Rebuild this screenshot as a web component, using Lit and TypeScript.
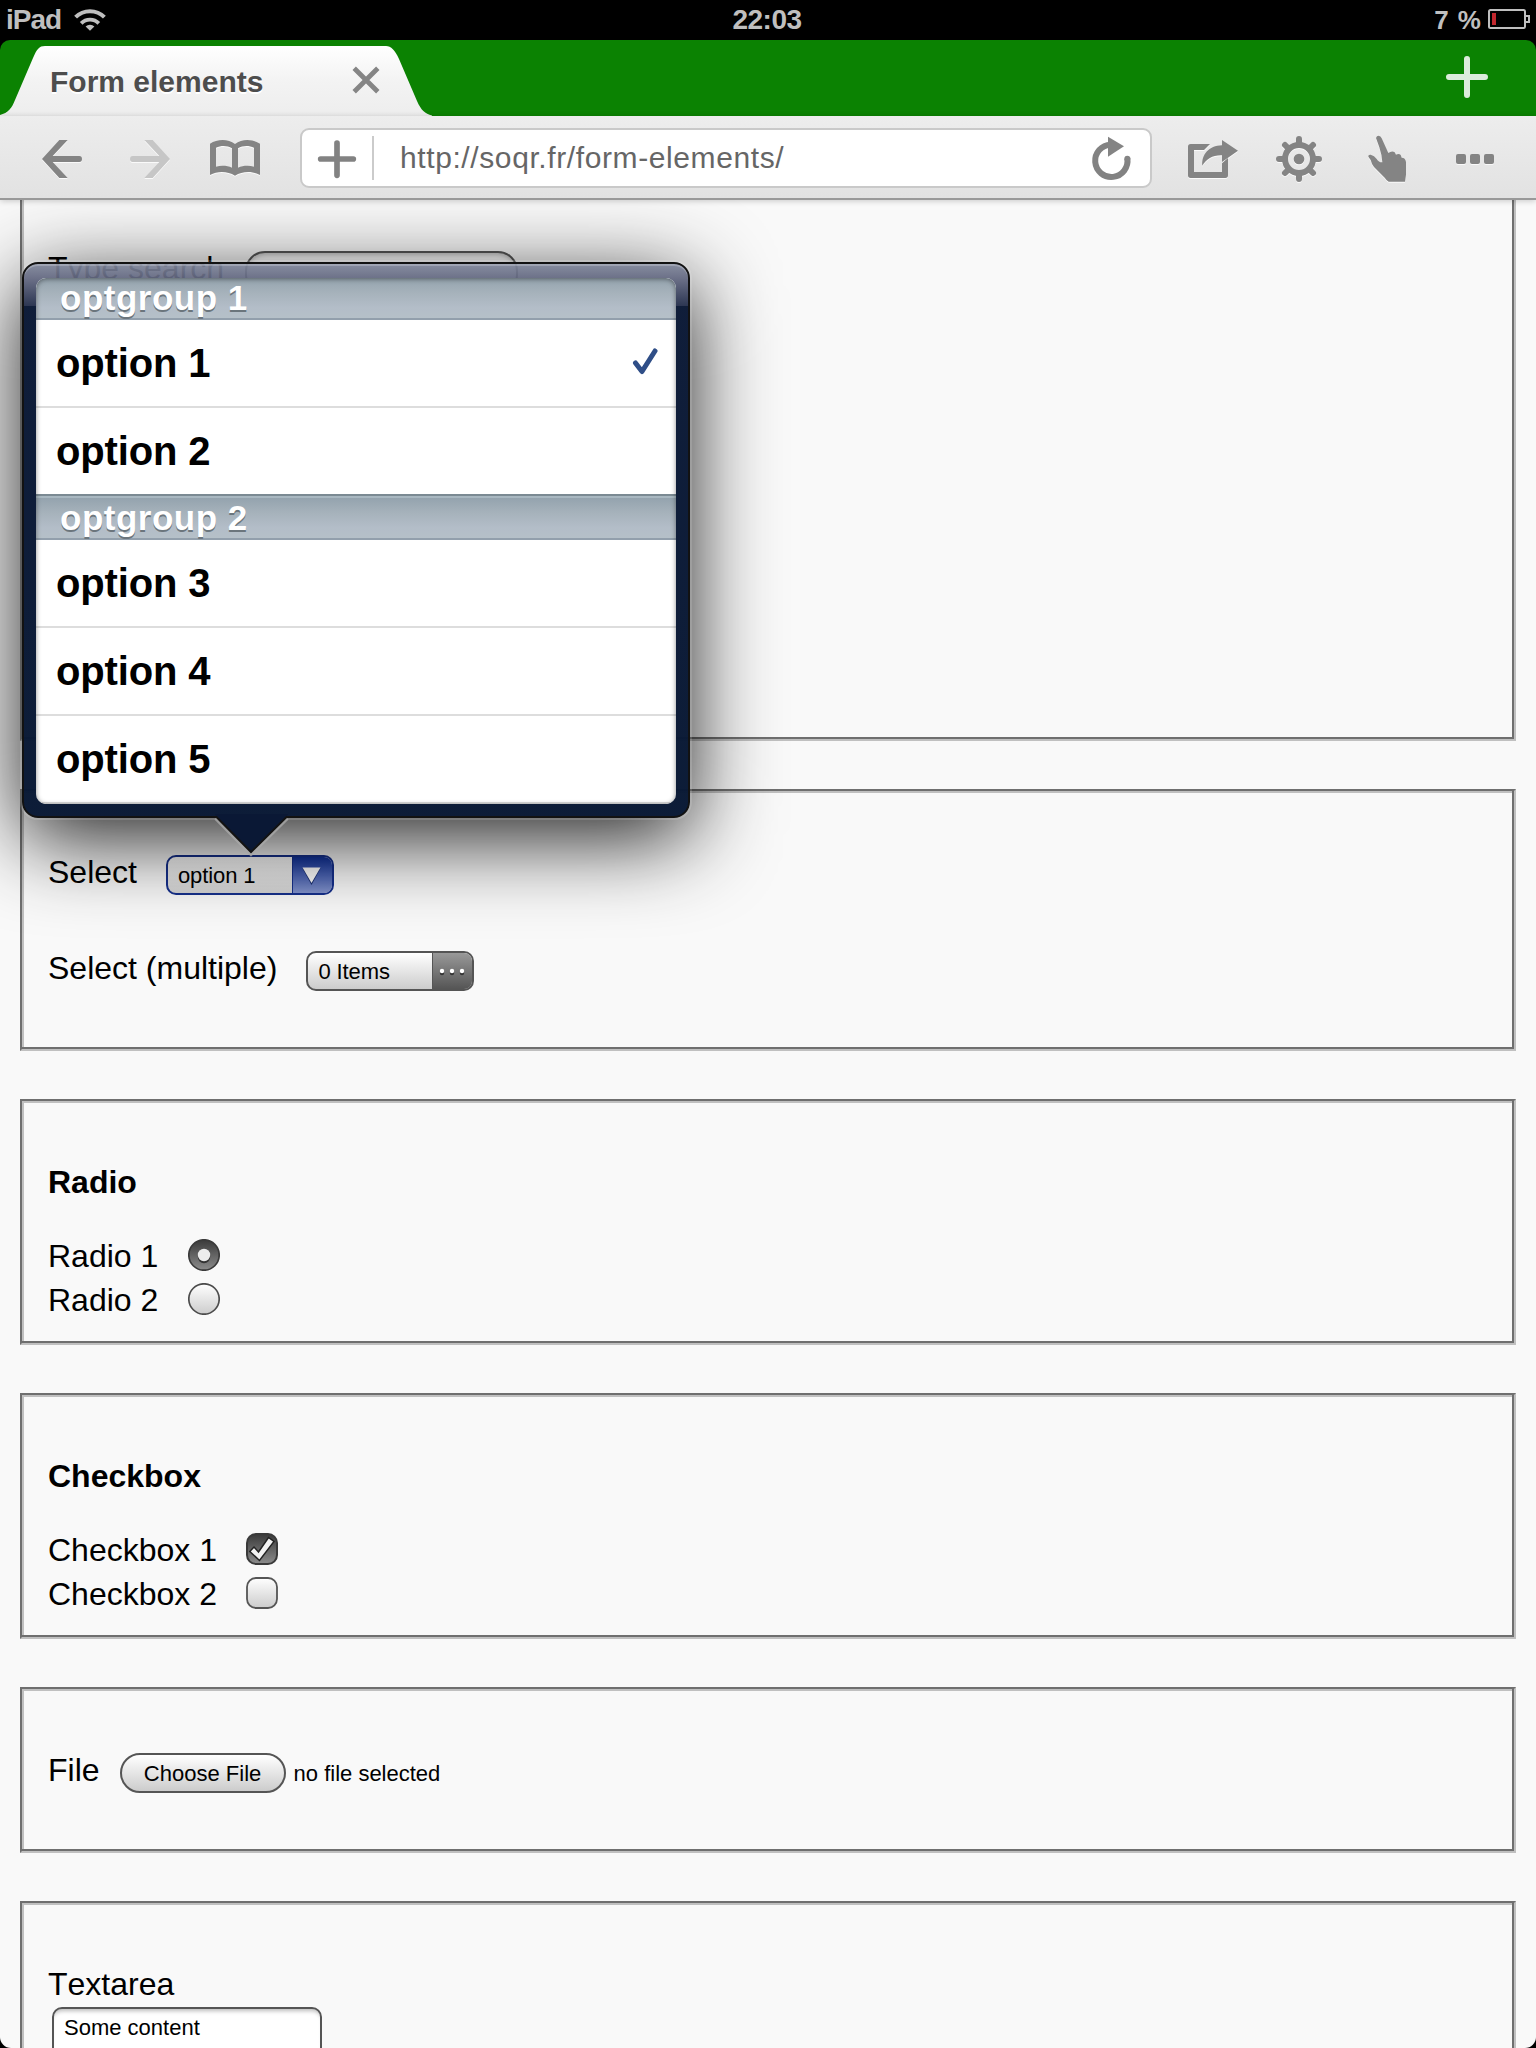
import { LitElement, html, css } from "lit";
import { customElement, property } from "lit/decorators.js";

type Row = { group: string } | { option: string; checked?: boolean };

const ROWS: Row[] = [
  { group: "optgroup 1" },
  { option: "option 1", checked: true },
  { option: "option 2" },
  { group: "optgroup 2" },
  { option: "option 3" },
  { option: "option 4" },
  { option: "option 5" },
];

@customElement("status-bar")
class StatusBar extends LitElement {
  static styles = css`
    :host {
      display: grid;
      grid-template-columns: 1fr auto 1fr;
      height: 40px;
      background: #000;
      color: #bfbfbf;
      font: bold 28px/39px "Liberation Sans", Arial, sans-serif;
    }
    .left { display: flex; padding-left: 6px; letter-spacing: -1px; }
    .wifi { margin-left: 12px; }
    .clock { letter-spacing: -0.5px; margin-right: 2px; }
    .right { display: flex; justify-content: flex-end; font-size: 26px; }
    .pct { line-height: 41px; word-spacing: 2px; }
    .batt { margin-left: 5px; }
  `;
  render() {
    return html`
      <div class="left">
        <span>iPad</span>
        <svg class="wifi" width="34" height="40" viewBox="73 0 34 40" fill="none" stroke="#bfbfbf" stroke-width="4">
          <path d="M75.6 17.2A20.2 20.2 0 0 1 104.4 17.2" />
          <path d="M81.2 23.4A12.2 12.2 0 0 1 98.8 23.4" stroke-width="3.8" />
          <path d="M90 30.8L85.6 26.4A6.5 6.5 0 0 1 94.4 26.4Z" fill="#bfbfbf" stroke="none" />
        </svg>
      </div>
      <div class="clock">22:03</div>
      <div class="right">
        <span class="pct">7 %</span>
        <svg class="batt" width="50" height="40" viewBox="1486 0 50 40">
          <rect x="1489" y="10" width="36" height="18" rx="1.5" fill="none" stroke="#bfbfbf" stroke-width="2" />
          <path d="M1526 16H1529V22H1526" fill="none" stroke="#bfbfbf" stroke-width="2" />
          <rect x="1492" y="13" width="4" height="12" fill="#c1272d" />
        </svg>
      </div>
    `;
  }
}

@customElement("tab-strip")
class TabStrip extends LitElement {
  static styles = css`
    :host {
      display: flex;
      justify-content: space-between;
      height: 76px;
      background: #0b8202;
      border-radius: 10px 10px 0 0;
      font-family: "Liberation Sans", Arial, sans-serif;
    }
    .tab { position: relative; display: flex; width: 432px; height: 76px; }
    .shape { position: absolute; left: 0; top: 0; }
    .title {
      position: relative;
      box-sizing: border-box;
      width: 342px;
      padding-left: 50px;
      font: bold 30px/84px "Liberation Sans", Arial, sans-serif;
      font-kerning: none;
      color: #4d4d4d;
      text-shadow: 0 2px 0 #fff;
      white-space: nowrap;
    }
    .close { position: relative; }
  `;
  render() {
    return html`
      <div class="tab">
        <svg class="shape" width="432" height="76" viewBox="0 40 432 76">
          <defs>
            <linearGradient id="t" x1="0" y1="0" x2="0" y2="1">
              <stop offset="0" stop-color="#fff" />
              <stop offset=".5" stop-color="#f3f3f3" />
              <stop offset="1" stop-color="#ededed" />
            </linearGradient>
          </defs>
          <path
            fill="url(#t)"
            d="M0 116V115C8 113 12 108 15 100L33 58C37 49 39 46 45 46H386C391 46 395 50 399 59L417 101C421 110 425 114 432 115.4V116Z"
          />
        </svg>
        <span class="title">Form elements</span>
        <svg class="close" width="48" height="76" viewBox="342 40 48 76">
          <path d="M354.2 68.2L377.8 91.8M377.8 68.2L354.2 91.8" stroke="#858585" stroke-width="4.8" />
        </svg>
      </div>
      <svg width="96" height="76" viewBox="1440 40 96 76">
        <path d="M1449 77H1485M1467 59V95" stroke="#dcecdc" stroke-width="6" stroke-linecap="round" />
      </svg>
    `;
  }
}

@customElement("tool-bar")
class ToolBar extends LitElement {
  static styles = css`
    :host {
      position: relative;
      z-index: 3;
      display: flex;
      box-sizing: border-box;
      height: 84px;
      border-bottom: 2px solid #999;
      background: linear-gradient(#ededed, #e2e2e2);
      box-shadow: 0 1px 6px rgba(0, 0, 0, 0.2);
      fill: #848484;
      stroke: none;
    }
    .icon { display: block; flex: none; filter: drop-shadow(0 1.5px 0 rgba(255, 255, 255, 0.8)); }
    .off { fill: #c6c6c6; }
    .url {
      display: flex;
      align-items: center;
      box-sizing: border-box;
      width: 852px;
      height: 60px;
      margin: 12px 0 0 20px;
      border: 2px solid #c9c9c9;
      border-radius: 9px;
      background: #fff;
    }
    .plain { display: block; flex: none; }
    .line { width: 2px; height: 44px; background: #cbcbcb; }
    .text {
      flex: 1;
      margin-left: 26px;
      font: 30px/54px "Liberation Sans", Arial, sans-serif;
      letter-spacing: 0.6px;
      color: #666;
    }
  `;
  render() {
    return html`
      <svg class="icon" width="106" height="82" viewBox="0 348 318 246">
        <path d="M126 477L178 420H203L158 468H238Q246 468 246 477T238 486H158L203 534H178Z" />
      </svg>
      <svg class="icon off" width="84" height="82" viewBox="318 348 252 246">
        <path d="M510 477L458 420H433L478 468H398Q390 468 390 477T398 486H478L433 534H458Z" />
      </svg>
      <svg class="icon" width="90" height="82" viewBox="570 348 270 246">
        <path
          fill-rule="evenodd"
          d="M630 431C652 417 684 416 705 432C726 416 758 417 780 431V525C757 512 727 513 705 527C683 513 653 512 630 525ZM648 443V500C664 496 682 497 696 503V445C682 436 663 436 648 443ZM762 443C747 436 728 436 714 445V503C728 497 746 496 762 500Z"
        />
      </svg>
      <div class="url">
        <svg class="plain" width="70" height="56" viewBox="906 390 210 168">
          <path d="M962 477H1060M1011 429V526" fill="none" stroke="#828282" stroke-width="17" stroke-linecap="round" />
        </svg>
        <span class="line"></span>
        <span class="text">http://soqr.fr/form-elements/</span>
        <svg class="plain" width="70" height="56" viewBox="192 390 210 168">
          <path d="M334 475A48.5 48.5 0 1 1 284 434" fill="none" stroke="#828282" stroke-width="18" />
          <circle cx="334" cy="476" r="9" />
          <path d="M276 410L324 439L276 470Z" />
        </svg>
      </div>
      <svg class="icon" width="106" height="82" viewBox="408 348 318 246">
        <path
          d="M524 432H582L564 450H534V516H618V490L636 474V526Q636 534 628 534H524Q516 534 516 526V440Q516 432 524 432Z"
        />
        <path d="M618 420L666 452L618 486V466C590 465 572 476 559 497C556 465 578 437 618 436Z" />
      </svg>
      <svg class="icon" width="84" height="82" viewBox="726 348 252 246">
        <g fill="none" stroke="#848484" stroke-linecap="round" stroke-width="18">
          <circle cx="849" cy="477" r="42" />
          <path d="M849 417V430M849 524V537M789 477H802M896 477H909M807 435L816 444M882 510L891 519M807 519L816 510M882 444L891 435" />
        </g>
        <circle cx="849" cy="477" r="16" />
      </svg>
      <svg class="icon" width="88" height="82" viewBox="978 348 264 246">
        <path
          d="M1080 414Q1082 407 1088 407Q1094 408 1097 415L1117 459Q1128 451 1136 457L1140 464Q1149 459 1154 465L1157 473Q1168 473 1170 486V524L1167 545H1118Q1112 542 1106 533L1074 501Q1067 493 1064 480L1057 470Q1056 463 1064 464Q1075 467 1082 477Q1089 488 1099 487Q1098 466 1090 442Z"
        />
      </svg>
      <svg class="icon" width="106" height="82" viewBox="1242 348 318 246">
        <rect x="1320" y="462" width="30" height="30" rx="6" />
        <rect x="1362" y="462" width="30" height="30" rx="6" />
        <rect x="1404" y="462" width="30" height="30" rx="6" />
      </svg>
    `;
  }
}

@customElement("select-control")
class SelectControl extends LitElement {
  @property() text = "";
  @property({ type: Boolean }) multiple = false;
  static styles = css`
    :host { display: block; }
    .box {
      display: flex;
      box-sizing: border-box;
      width: 168px;
      height: 40px;
      border: 2px solid #555;
      border-radius: 10px;
      overflow: hidden;
      background: linear-gradient(#fff, #ccc);
      font: 22px/38px "Liberation Sans", Arial, sans-serif;
    }
    .value { flex: 1; padding-left: 10px; white-space: nowrap; letter-spacing: -0.1px; }
    .cap { width: 39px; border-left: 1px solid #555; background: linear-gradient(#999, #555); }
    .cap svg { display: block; }
    .open { border-color: #16308c; background: linear-gradient(#fff, #d4d4d4); }
    .open .cap { border-color: #16308c; background: linear-gradient(#10329c, #8494cc); }
  `;
  render() {
    return html`<div class="box ${this.multiple ? "" : "open"}">
      <span class="value">${this.text}</span>
      <span class="cap">
        ${this.multiple
          ? html`<svg width="39" height="36" viewBox="0 0 39 36">
              <g fill="#333"><circle cx="9" cy="20" r="2.2" /><circle cx="19" cy="20" r="2.2" /><circle cx="29" cy="20" r="2.2" /></g>
              <g fill="#fff"><circle cx="9" cy="18" r="2.2" /><circle cx="19" cy="18" r="2.2" /><circle cx="29" cy="18" r="2.2" /></g>
            </svg>`
          : html`<svg width="39" height="36" viewBox="0 0 39 36">
              <path d="M9.5 11.5H27.5L18.5 28Z" fill="#1a2f70" />
              <path d="M9.5 10.5H27.5L18.5 26Z" fill="#fff" />
            </svg>`}
      </span>
    </div>`;
  }
}

@customElement("select-popover")
class SelectPopover extends LitElement {
  static styles = css`
    :host { display: block; font-family: "Liberation Sans", Arial, sans-serif; }
    .frame {
      position: relative;
      box-sizing: border-box;
      width: 668px;
      height: 556px;
      border: 2px solid #121212;
      border-radius: 16px;
      padding: 14px 12px 12px;
      background:
        linear-gradient(rgba(126, 133, 153, 0.93), rgba(98, 103, 128, 0.93) 14px, rgba(38, 48, 77, 0.97)) 0 0 / 100% 42px no-repeat,
        linear-gradient(rgba(11, 25, 54, 0.98), rgba(8, 24, 52, 0.98)) 0 42px / 100% 510px no-repeat;
      box-shadow:
        inset 0 2px 0 rgba(255, 255, 255, 0.22),
        0 0 0 2px rgba(255, 255, 255, 0.15),
        0 20px 84px rgba(0, 0, 0, 0.88);
    }
    .arrow { position: absolute; left: 190px; top: 550px; }
    .list {
      position: relative;
      display: flex;
      flex-direction: column;
      justify-content: flex-end;
      height: 526px;
      border-radius: 10px;
      overflow: hidden;
      background: #fff;
    }
    .list::after {
      content: "";
      position: absolute;
      inset: 0;
      border-radius: 10px;
      box-shadow: inset 0 1px 5px rgba(0, 0, 0, 0.45);
    }
    .group {
      flex: none;
      box-sizing: border-box;
      height: 46px;
      border-top: 2px solid #7b8a93;
      border-bottom: 2px solid #929fac;
      margin-top: -2px;
      padding-left: 24px;
      background: linear-gradient(#a9b8c1 2px, #94a3ae 2px, #a6b2bb 40%, #b3bdc8 75%, #b5c0c8);
      color: #fff;
      font-size: 35px;
      font-weight: bold;
      line-height: 43px;
      letter-spacing: 0.5px;
      text-shadow: 0 2px 0 #6b757c;
    }
    .option {
      flex: none;
      display: flex;
      justify-content: space-between;
      box-sizing: border-box;
      height: 88px;
      border-bottom: 2px solid #ddd;
      padding-left: 20px;
      font-size: 40px;
      font-weight: bold;
      line-height: 87px;
      letter-spacing: -0.15px;
    }
  `;
  render() {
    return html`<div class="frame">
      <div class="list">
        ${ROWS.map((r) =>
          "group" in r
            ? html`<div class="group">${r.group}</div>`
            : html`<div class="option">
                <span>${r.option}</span>
                ${r.checked
                  ? html`<svg width="46" height="86" viewBox="630 320 46 86">
                      <path d="M635.5 363L642 371.5L655 351" fill="none" stroke="#2f4e87" stroke-width="5" stroke-linecap="round" stroke-linejoin="round" />
                    </svg>`
                  : ""}
              </div>`
        )}
      </div>
      <svg class="arrow" width="78" height="44" viewBox="214 814 78 44">
        <path d="M216 818L251 853.5L287 818" fill="none" stroke="#a8a8a8" stroke-opacity=".8" stroke-width="4.5" />
        <path d="M215 814L217 817L251 851.5L286 817L288 814Z" fill="#0a1835" />
        <path d="M214 817H216.5L251 852L286.5 817H289" fill="none" stroke="#121212" stroke-width="2" />
      </svg>
    </div>`;
  }
}

@customElement("app-root")
class AppRoot extends LitElement {
  static styles = css`
    :host {
      display: block;
      width: 1536px;
      height: 2048px;
      overflow: hidden;
      background: #000;
      color: #000;
      font: 32px/44px "Liberation Sans", Arial, sans-serif;
      font-kerning: none;
    }
    .page {
      position: relative;
      display: flex;
      flex-direction: column;
      gap: 48px;
      box-sizing: border-box;
      height: 1848px;
      padding: 0 20px;
      overflow: hidden;
      background: #f9f9f9;
      border-radius: 0 0 11px 11px;
    }
    .set {
      flex: none;
      box-sizing: border-box;
      border: 2px solid;
      border-color: #6f6f6f #c0c0c0 #c0c0c0 #6f6f6f;
      box-shadow: inset -2px -2px 0 #6f6f6f, inset 2px 2px 0 #c0c0c0;
      padding: 59px 26px 0;
    }
    .search { height: 541px; border-top: 0; padding-top: 46px; box-shadow: inset -2px -2px 0 #6f6f6f, inset 2px 0 0 #c0c0c0; }
    .selects { height: 262px; }
    .choices { height: 246px; }
    .file { height: 166px; }
    .area { height: 240px; }
    .row { display: flex; height: 44px; white-space: nowrap; }
    .gap { margin-top: 52px; }
    .head { font-weight: bold; margin-bottom: 30px; }
    .ctl { margin: 5px 0 0 29px; }
    .dot { margin-left: 29.7px; }
    .field {
      box-sizing: border-box;
      width: 273px;
      height: 44px;
      margin: 5px 0 0 21px;
      border: 2px solid #555;
      border-radius: 20px;
      background: #fff;
      box-shadow: inset 0 4px 4px -2px #bbb;
    }
    .button {
      box-sizing: border-box;
      width: 166px;
      height: 40px;
      margin: 5px 8px 0 20px;
      border: 2px solid #555;
      border-radius: 20px;
      background: linear-gradient(#fff, #ccc);
      font-size: 22px;
      line-height: 38px;
      text-align: center;
    }
    .note { font-size: 22px; line-height: 52px; }
    .textarea {
      box-sizing: border-box;
      width: 270px;
      height: 90px;
      margin: 1px 0 0 4px;
      padding-left: 10px;
      border: 2px solid #555;
      border-radius: 10px;
      background: #fff;
      box-shadow: inset 0 5px 4px -3px #bbb;
      font-size: 22px;
      line-height: 37px;
    }
    .popover { position: absolute; left: 22px; top: 62px; z-index: 2; }
  `;

  private radio(on: boolean) {
    return html`<svg class="ctl dot" width="32" height="32" viewBox="0 0 32 32">
      <defs>
        <linearGradient id="g" x1="0" y1="0" x2="0" y2="1">
          <stop offset="0" stop-color="#3a3a3a" /><stop offset="1" stop-color="#8c8c8c" />
        </linearGradient>
        <linearGradient id="d" x1="0" y1="0" x2="0" y2="1">
          <stop offset="0" stop-color="#fff" /><stop offset="1" stop-color="#ccc" />
        </linearGradient>
      </defs>
      <circle cx="16" cy="16" r="15.2" fill="url(#${on ? "g" : "d"})" stroke=${on ? "#3a3a3a" : "#4c4c4c"} stroke-width="1.7" />
      ${on
        ? html`<svg width="32" height="32" viewBox="0 0 32 32"><circle cx="16" cy="18" r="6.2" fill="#333" /><circle cx="16" cy="16" r="6.2" fill="#ececec" /></svg>`
        : ""}
    </svg>`;
  }

  private check(on: boolean) {
    return on
      ? html`<svg class="ctl" width="32" height="32" viewBox="0 0 32 32">
          <defs>
            <linearGradient id="c" x1="0" y1="0" x2="0" y2="1">
              <stop offset="0" stop-color="#3a3a3a" /><stop offset="1" stop-color="#8c8c8c" />
            </linearGradient>
          </defs>
          <rect x="1" y="1" width="30" height="30" rx="9" fill="url(#c)" stroke="#3a3a3a" stroke-width="2" />
          <path d="M3.8 18.5L8 14L12.5 19L22.5 4.5L28 8.5L13.5 27.5Z" fill="#f2f2f2" stroke="#222" stroke-width="1.5" />
        </svg>`
      : html`<svg class="ctl" width="32" height="32" viewBox="0 0 32 32">
          <defs>
            <linearGradient id="u" x1="0" y1="0" x2="0" y2="1">
              <stop offset="0" stop-color="#fff" /><stop offset="1" stop-color="#ccc" />
            </linearGradient>
          </defs>
          <rect x="1" y="1" width="30" height="30" rx="9" fill="url(#u)" stroke="#555" stroke-width="1.8" />
        </svg>`;
  }

  render() {
    return html`
      <status-bar></status-bar>
      <tab-strip></tab-strip>
      <tool-bar></tool-bar>
      <main class="page">
        <section class="set search">
          <div class="row"><span>Type search</span><span class="field"></span></div>
        </section>
        <section class="set selects">
          <div class="row"><span>Select</span><select-control class="ctl" text="option 1"></select-control></div>
          <div class="row gap">
            <span>Select (multiple)</span><select-control class="ctl" text="0 Items" multiple></select-control>
          </div>
        </section>
        <section class="set choices">
          <div class="row head">Radio</div>
          <div class="row"><span>Radio 1</span>${this.radio(true)}</div>
          <div class="row"><span>Radio 2</span>${this.radio(false)}</div>
        </section>
        <section class="set choices">
          <div class="row head">Checkbox</div>
          <div class="row"><span>Checkbox 1</span>${this.check(true)}</div>
          <div class="row"><span>Checkbox 2</span>${this.check(false)}</div>
        </section>
        <section class="set file">
          <div class="row">
            <span>File</span><span class="button">Choose File</span><span class="note">no file selected</span>
          </div>
        </section>
        <section class="set area">
          <div class="row">Textarea</div>
          <div class="textarea">Some content</div>
        </section>
        <select-popover class="popover"></select-popover>
      </main>
    `;
  }
}
